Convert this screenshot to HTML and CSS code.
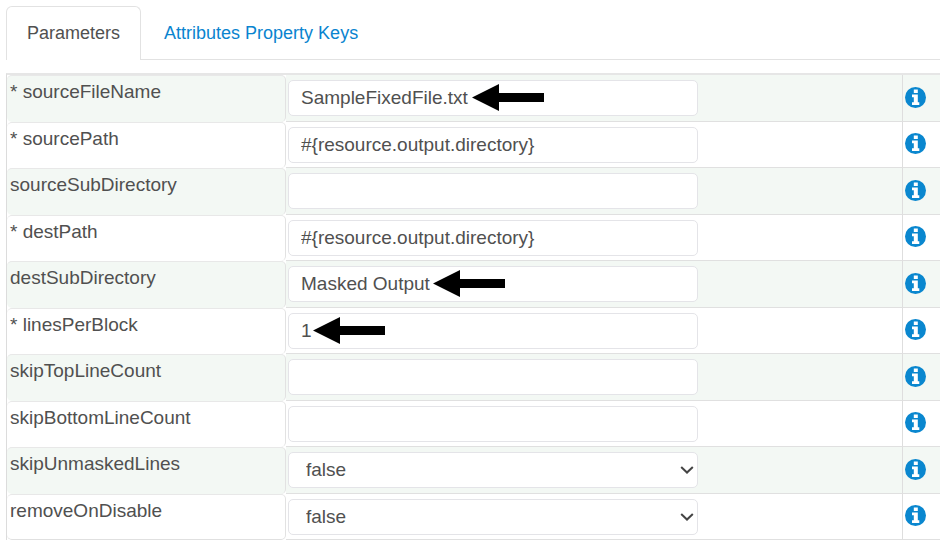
FILE: index.html
```html
<!DOCTYPE html>
<html lang="en">
<head>
<meta charset="utf-8">
<title>Parameters</title>
<link rel="stylesheet" href="styles.css">
</head>
<body>
<svg class="defs" aria-hidden="true">
  <symbol id="info" viewBox="0 0 21 21"><circle cx="10.5" cy="10.5" r="10.5" fill="#0a87cf"/><path fill="#fff" d="M8.800 2.600h4v3.400h-4zM7 7.500h5.800v7.800h1.500v2.700H7v-2.700h1.800v-5H7z"/></symbol>
  <symbol id="arrow" viewBox="0 0 72 27"><path d="M0 13.5 27 0v9h45v9H27v9z"/></symbol>
  <symbol id="chevron" viewBox="0 0 14 8"><path d="M1.200 1 7 6.500 12.800 1" fill="none" stroke="#444" stroke-width="2"/></symbol>
</svg>
<nav class="tabs">
  <a class="tab tab-active" href="#parameters">Parameters</a>
  <a class="tab" href="#keys">Attributes Property Keys</a>
</nav>
<table class="params" id="parameters">
  <colgroup><col class="col-name"><col><col class="col-info"></colgroup>
  <tbody>
    <tr><th scope="row"><label for="p1">* sourceFileName</label></th><td><div class="field"><input id="p1" type="text" value="SampleFixedFile.txt"><svg class="arrow arrow-file" aria-hidden="true"><use href="#arrow"/></svg></div></td><td class="info"><button type="button" aria-label="About sourceFileName"><svg><use href="#info"/></svg></button></td></tr>
    <tr><th scope="row"><label for="p2">* sourcePath</label></th><td><div class="field"><input id="p2" type="text" value="#{resource.output.directory}"></div></td><td class="info"><button type="button" aria-label="About sourcePath"><svg><use href="#info"/></svg></button></td></tr>
    <tr><th scope="row"><label for="p3">sourceSubDirectory</label></th><td><div class="field"><input id="p3" type="text"></div></td><td class="info"><button type="button" aria-label="About sourceSubDirectory"><svg><use href="#info"/></svg></button></td></tr>
    <tr><th scope="row"><label for="p4">* destPath</label></th><td><div class="field"><input id="p4" type="text" value="#{resource.output.directory}"></div></td><td class="info"><button type="button" aria-label="About destPath"><svg><use href="#info"/></svg></button></td></tr>
    <tr><th scope="row"><label for="p5">destSubDirectory</label></th><td><div class="field"><input id="p5" type="text" value="Masked Output"><svg class="arrow arrow-output" aria-hidden="true"><use href="#arrow"/></svg></div></td><td class="info"><button type="button" aria-label="About destSubDirectory"><svg><use href="#info"/></svg></button></td></tr>
    <tr><th scope="row"><label for="p6">* linesPerBlock</label></th><td><div class="field"><input id="p6" type="text" value="1"><svg class="arrow arrow-lines" aria-hidden="true"><use href="#arrow"/></svg></div></td><td class="info"><button type="button" aria-label="About linesPerBlock"><svg><use href="#info"/></svg></button></td></tr>
    <tr><th scope="row"><label for="p7">skipTopLineCount</label></th><td><div class="field"><input id="p7" type="text"></div></td><td class="info"><button type="button" aria-label="About skipTopLineCount"><svg><use href="#info"/></svg></button></td></tr>
    <tr><th scope="row"><label for="p8">skipBottomLineCount</label></th><td><div class="field"><input id="p8" type="text"></div></td><td class="info"><button type="button" aria-label="About skipBottomLineCount"><svg><use href="#info"/></svg></button></td></tr>
    <tr><th scope="row"><label for="p9">skipUnmaskedLines</label></th><td><div class="field"><select id="p9"><option>false</option><option>true</option></select><svg class="chevron" aria-hidden="true"><use href="#chevron"/></svg></div></td><td class="info"><button type="button" aria-label="About skipUnmaskedLines"><svg><use href="#info"/></svg></button></td></tr>
    <tr><th scope="row"><label for="p10">removeOnDisable</label></th><td><div class="field"><select id="p10"><option>false</option><option>true</option></select><svg class="chevron" aria-hidden="true"><use href="#chevron"/></svg></div></td><td class="info"><button type="button" aria-label="About removeOnDisable"><svg><use href="#info"/></svg></button></td></tr>
  </tbody>
</table>
</body>
</html>
```
FILE: styles.css
```css
* {
  box-sizing: border-box;
}

body {
  margin: 6px 3px 0 6px;
  background: #fff;
  color: #505050;
  font-family: "Liberation Sans", Arial, sans-serif;
  font-size: 19px;
  line-height: 24px;
}

.defs {
  position: absolute;
  width: 0;
  height: 0;
}

.tabs {
  display: flex;
  gap: 2px;
  margin-bottom: 13px;
  border-bottom: 1px solid #e2e2e2;
  font-size: 18px;
}

.tab {
  padding: 14px 20px;
  border: 1px solid transparent;
  border-bottom: 0;
  color: #0a84cf;
  text-decoration: none;
}

.tab-active {
  margin-bottom: -1px;
  border-color: #e2e2e2;
  border-radius: 6px 6px 0 0;
  background: #fff;
  color: #505050;
}

.params {
  width: 100%;
  table-layout: fixed;
  border-collapse: separate;
  border-spacing: 0;
  border-top: 2px solid #e6e6e6;
  border-left: 1px solid #dcdcdc;
}

.col-name {
  width: 279px;
}

.col-info {
  width: 38px;
}

tr {
  height: 46px;
}

tr:nth-child(odd) {
  height: 47px;
  background: #f3f8f4;
}

th,
td {
  padding: 0;
  border-bottom: 1px solid #e0e0e0;
}

th {
  border-top: 1px solid #e8e8e8;
  border-right: 1px solid #e2e2e2;
  border-bottom: 0;
  border-radius: 5px;
  padding: 4px 3px;
  font-weight: normal;
  text-align: left;
  vertical-align: top;
}

tr:last-child th {
  border-bottom: 1px solid #e0e0e0;
}

label {
  display: block;
}

td {
  padding: 0 2px;
}

.field {
  position: relative;
  width: 67%;
}

input,
select {
  display: block;
  width: 100%;
  height: 36px;
  margin: 0;
  padding: 0 12px;
  border: 1px solid #e4e4e8;
  border-radius: 5px;
  background: #fff;
  color: #505050;
  font: inherit;
}

select {
  appearance: none;
  padding: 0 17px;
}

.chevron {
  position: absolute;
  top: 14px;
  right: 4px;
  width: 14px;
  height: 8px;
  pointer-events: none;
}

.arrow {
  position: absolute;
  top: 4px;
  width: 72px;
  height: 27px;
  pointer-events: none;
}

.arrow-file {
  left: 184px;
}

.arrow-output {
  left: 145px;
}

.arrow-lines {
  left: 25px;
}

.info {
  padding-bottom: 2px;
  border-left: 1px solid #dedede;
}

.info button {
  display: block;
  padding: 0;
  border: 0;
  background: none;
}

.info svg {
  display: block;
  width: 21px;
  height: 21px;
}
```
